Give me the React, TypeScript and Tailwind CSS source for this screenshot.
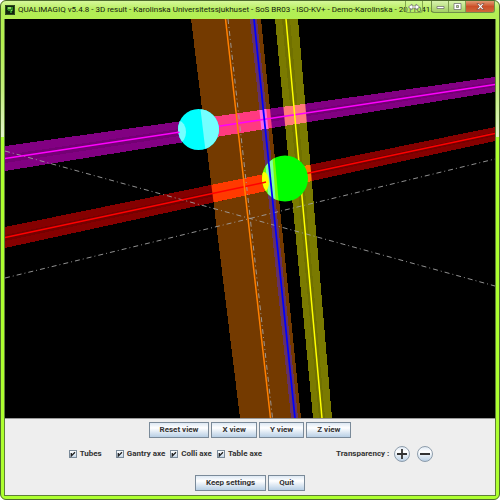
import React from "react";

const GANTRY = "191,19 261,19 301,418 240,418";
const COLLI = "250,19 257,19 298,418 291,418";
const TABLE = "275,19 298,19 332,418 313,418";
const MAGENTA = "5,146 495,77 495,92 5,171";
const RED = "5,227 495,127 495,141 5,248";

function Scene() {
  return (
    <svg
      viewBox="5 19 490 399"
      preserveAspectRatio="xMidYMid slice"
      className="block min-h-0 w-full flex-1 bg-black"
      role="img"
      aria-label="3D result"
    >
      <defs>
        <clipPath id="gantry"><polygon points={GANTRY} /></clipPath>
        <clipPath id="colli"><polygon points={COLLI} /></clipPath>
        <clipPath id="table"><polygon points={TABLE} /></clipPath>
        <clipPath id="cyan"><circle cx="198.5" cy="129.5" r="20.5" /></clipPath>
        <clipPath id="green"><circle cx="285" cy="178.5" r="23" /></clipPath>
      </defs>
      <g shapeRendering="crispEdges">
        <polygon points={GANTRY} fill="#743a00" />
        <polygon points={TABLE} fill="#7a7a00" />
        <polygon points="282,19 290,19 325,418 319,418" fill="#707000" />
        <polygon points={MAGENTA} fill="#820082" />
        <polygon points="5,155 495,82 495,87 5,163" fill="#740074" />
        <polygon points={RED} fill="#850000" />
        <polygon points="5,235 495,132 495,136 5,241" fill="#740000" />
        <polygon points={COLLI} fill="#643066" />
        <g clipPath="url(#gantry)">
          <polygon points={MAGENTA} fill="#ff3a80" />
          <polygon points={RED} fill="#ff3a00" />
        </g>
        <g clipPath="url(#table)">
          <polygon points={MAGENTA} fill="#ff7a7a" />
          <polygon points={RED} fill="#ff7a00" />
        </g>
        <g clipPath="url(#colli)">
          <polygon points={MAGENTA} fill="#ff66e8" />
        </g>
      </g>
      <g fill="none">
        <g stroke="#a0a0a0" strokeWidth="0.9" strokeDasharray="5 3 1 3">
          <path d="M5 151L495 286" />
          <path d="M5 278L495 159" />
          <path d="M228 19L272.5 418" />
        </g>
        <path d="M5 158.5L495 84.5" stroke="#ff00ff" strokeWidth="1.5" />
        <path d="M5 237.5L495 133.5" stroke="#ff0000" strokeWidth="1.5" />
        <path d="M225.5 19L270.5 418" stroke="#ff8000" strokeWidth="1.5" />
        <path d="M286 19L322 418" stroke="#ffff00" strokeWidth="1.5" />
      </g>
      <g clipPath="url(#cyan)">
        <rect x="177" y="108" width="43" height="43" fill="#00ffff" />
        <polygon points="200,105 225,105 225,155 206,155" fill="#74ffff" />
        <ellipse cx="179" cy="132" rx="7" ry="11" fill="#74ffff" />
      </g>
      <path d="M177 132.5L179.5 132.2" stroke="#ff00ff" strokeWidth="1.5" />
      <g clipPath="url(#green)">
        <rect x="261" y="155" width="48" height="48" fill="#00ff00" />
        <polygon points="272,150 274,150 279,205 274,205" fill="#74ff00" />
        <polygon points="264,150 272,150 276,205 268,205" fill="#80ffa0" />
        <polygon points="255,150 264,150 269,205 255,205" fill="#74ff00" />
        <ellipse cx="264" cy="182" rx="5" ry="10" fill="#ffff00" />
      </g>
      <path d="M262 183L266 182" stroke="#ff0000" strokeWidth="1.5" />
      <path d="M254 19L295 418" stroke="#0000ff" strokeWidth="1.8" />
    </svg>
  );
}

function AppIcon() {
  return (
    <svg viewBox="0 0 10 10" className="h-[10px] w-[10px] shrink-0" aria-hidden="true">
      <rect width="10" height="10" fill="#10250c" />
      <path d="M2 2h6v4H7v2H5V6H3V5H2z" fill="#2f8c25" />
      <path d="M3 2h3v2H3zM6 5h1v1H6z" fill="#8fd860" />
      <path d="M.5.5h9v9h-9z" fill="none" stroke="#314c22" />
    </svg>
  );
}

function TitleBar() {
  return (
    <header className="flex h-[18px] shrink-0 items-start pr-px pl-px">
      <div className="flex h-[18px] w-0 flex-1 items-center gap-[3px]">
        <AppIcon />
        <h1 className="whitespace-nowrap font-[Roboto,sans-serif] text-[8px] leading-3 text-[#151a10]">
          QUALIMAGIQ v5.4.8 - 3D result - Karolinska Universitetssjukhuset - SoS BR03 - ISO-KV+ - Demo-Karolinska - 20110415
        </h1>
      </div>
      <button
        aria-label="Resize"
        className="mr-2 flex h-3 w-[18px] items-center justify-center rounded-b-[3px] border border-t-0 border-[#83a84e] bg-[#c8f58e]/30"
      >
        <svg viewBox="0 0 12 8" className="h-2 w-3" aria-hidden="true">
          <path d="M.5 4L4 1v2h4V1l3.5 3L8 7V5H4v2z" fill="#fff" stroke="#777" strokeWidth="0.8" />
        </svg>
      </button>
      <div className="flex h-3 overflow-hidden rounded-b-[3px] border border-t-0 border-[#6f8f48]">
        <button aria-label="Minimize" className="flex w-[17px] items-center justify-center border-r border-[#7fa04f] bg-gradient-to-b from-[#d9f4ae] to-[#a3cf62]">
          <svg viewBox="0 0 9 7" className="h-[7px] w-[9px]" aria-hidden="true">
            <path d="M1 3.5h7v2H1z" fill="#fff" stroke="#666" strokeWidth="0.7" />
          </svg>
        </button>
        <button aria-label="Maximize" className="flex w-[17px] items-center justify-center border-r border-[#7fa04f] bg-gradient-to-b from-[#d9f4ae] to-[#a3cf62]">
          <svg viewBox="0 0 9 7" className="h-[7px] w-[9px]" aria-hidden="true">
            <path d="M1 .5h7v6H1zM3.5 2.5h2v2h-2z" fillRule="evenodd" fill="#fff" stroke="#666" strokeWidth="0.7" />
          </svg>
        </button>
        <button aria-label="Close" className="flex w-7 items-center justify-center bg-gradient-to-b from-[#e09a72] via-[#cb4f28] to-[#d0683a]">
          <svg viewBox="0 0 9 7" className="h-[7px] w-[9px]" aria-hidden="true">
            <path d="M1 .5h2l1.5 1.8L6 .5h2L5.7 3.5 8 6.5H6L4.5 4.7 3 6.5H1l2.3-3z" fill="#fff" stroke="#663a30" strokeWidth="0.6" />
          </svg>
        </button>
      </div>
    </header>
  );
}

function MetalButton({ children }: { children: React.ReactNode }) {
  return (
    <button className="h-4 shrink-0 whitespace-nowrap border border-[#7a8a99] bg-gradient-to-b from-[#dde8f3] via-white via-35% to-[#b8cfe5] px-[10px] leading-3">
      {children}
    </button>
  );
}

function Check({ children }: { children: React.ReactNode }) {
  return (
    <label className="flex items-center gap-[3px] whitespace-nowrap">
      <span className="grid">
        <input
          type="checkbox"
          defaultChecked
          className="peer col-start-1 row-start-1 h-2 w-2 appearance-none border border-[#7a8a99] bg-gradient-to-b from-white to-[#c6d8ea]"
        />
        <svg viewBox="0 0 8 8" className="pointer-events-none invisible col-start-1 row-start-1 h-2 w-2 peer-checked:visible" aria-hidden="true">
          <path d="M2.3 3v3L6 2.3" fill="none" stroke="#222" strokeWidth="1.3" />
        </svg>
      </span>
      {children}
    </label>
  );
}

function RoundButton({ label, d }: { label: string; d: string }) {
  return (
    <button aria-label={label} className="h-4 w-4">
      <svg viewBox="0 0 16 16" className="block h-4 w-4" aria-hidden="true">
        <defs>
          <linearGradient id={label} x1="0" y1="0" x2="0" y2="1">
            <stop offset="0" stopColor="#dde8f3" />
            <stop offset="0.35" stopColor="#fff" />
            <stop offset="1" stopColor="#b8cfe5" />
          </linearGradient>
        </defs>
        <circle cx="8" cy="8" r="7.5" fill={`url(#${label})`} stroke="#8494a4" strokeWidth="0.9" />
        <path d={d} stroke="#333" strokeWidth="1.8" />
      </svg>
    </button>
  );
}

export default function App() {
  return (
    <div className="h-screen bg-white">
      <div className="flex h-full flex-col overflow-hidden rounded-[6px] border border-[#4d6a2c] bg-[#adff2f] bg-[linear-gradient(to_bottom,#d6f79b_0,#b2ee55_10px,#b4f04e_40px,#c4ef7c_90px,#e4f5cc_136px,#adff2f_136px)] px-[3px] pb-[3px]">
        <TitleBar />
        <main className="flex min-h-0 flex-1 flex-col border border-t-0 border-[#5f7f38]">
          <Scene />
          <section className="flex shrink-0 flex-col border-t border-[#9a9a9a] bg-[#eeeeee] pt-[3px] pb-1 font-[Roboto,sans-serif] text-[8px] font-bold leading-3 text-[#333]">
            <div className="flex justify-center gap-[2px]">
              <MetalButton>Reset view</MetalButton>
              <MetalButton>X view</MetalButton>
              <MetalButton>Y view</MetalButton>
              <MetalButton>Z view</MetalButton>
            </div>
            <div className="mt-2 flex items-center justify-center gap-[74px] pl-[2px]">
              <div className="flex items-center">
                <Check>Tubes</Check>
                <div className="ml-[14px] flex gap-[5px]">
                  <Check>Gantry axe</Check>
                  <Check>Colli axe</Check>
                  <Check>Table axe</Check>
                </div>
              </div>
              <div className="flex items-center gap-[5px] whitespace-nowrap">
                Transparency :
                <div className="flex gap-[7px]">
                  <RoundButton label="increase" d="M8 3v10M3 8h10" />
                  <RoundButton label="decrease" d="M3 8h10" />
                </div>
              </div>
            </div>
            <div className="mt-[13px] flex justify-center gap-[2px]">
              <MetalButton>Keep settings</MetalButton>
              <MetalButton>Quit</MetalButton>
            </div>
          </section>
        </main>
      </div>
    </div>
  );
}
